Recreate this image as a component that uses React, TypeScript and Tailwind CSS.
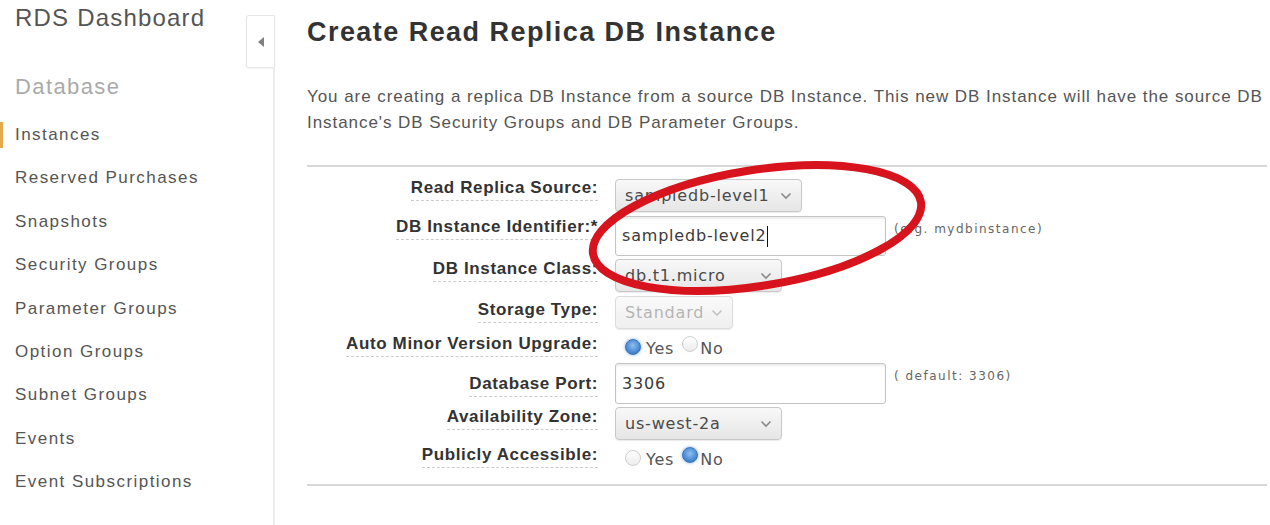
import React from "react";

const sans = { fontFamily: '"Liberation Sans", Arial, sans-serif' };
const ctl = { fontFamily: '"DejaVu Sans", "Liberation Sans", sans-serif' };

const navItems = [
  "Instances",
  "Reserved Purchases",
  "Snapshots",
  "Security Groups",
  "Parameter Groups",
  "Option Groups",
  "Subnet Groups",
  "Events",
  "Event Subscriptions",
];

function Chevron({ light = false }: { light?: boolean }) {
  return (
    <svg width="12" height="8" viewBox="0 0 12 8" className="shrink-0">
      <path
        d="M1.5 1.5 L6 6 L10.5 1.5"
        fill="none"
        stroke={light ? "#c4c4c4" : "#8a8a8a"}
        strokeWidth="1.6"
      />
    </svg>
  );
}

function Select({
  value,
  width,
  height,
  disabled = false,
}: {
  value: string;
  width: number;
  height: number;
  disabled?: boolean;
}) {
  return (
    <div
      style={{ ...ctl, width, height }}
      className={`flex items-center justify-between rounded-[4px] border pl-[9px] pr-[9px] text-[16px] tracking-[0.8px] shadow-[0_1px_1px_rgba(0,0,0,0.08)] ${
        disabled
          ? "border-[#dcdcdc] bg-gradient-to-b from-[#fafafa] to-[#efefef] text-[#b5b5b5]"
          : "border-[#c8c8c8] bg-gradient-to-b from-[#f8f8f8] to-[#e6e6e6] text-[#4a4a4a]"
      }`}
    >
      <span className="truncate">{value}</span>
      <Chevron light={disabled} />
    </div>
  );
}

function TextInput({
  value,
  height,
  caret = false,
}: {
  value: string;
  height: number;
  caret?: boolean;
}) {
  return (
    <div
      style={{ ...ctl, height }}
      className="flex w-[271px] items-center rounded-[3px] border border-[#c4c4c4] bg-white pl-[6px] text-[16px] tracking-[0.8px] text-[#3a3a3a] shadow-[inset_0_2px_2px_rgba(0,0,0,0.08)]"
    >
      <span>{value}</span>
      {caret && <span className="ml-[1px] inline-block h-[21px] w-[1px] bg-[#111]" />}
    </div>
  );
}

function Radio({ checked }: { checked: boolean }) {
  return checked ? (
    <span className="inline-block h-[16px] w-[16px] rounded-full border border-[#3b74b8] bg-[radial-gradient(circle_at_50%_40%,#8fc0f0_0%,#4f8fd6_55%,#2f68b0_100%)] shadow-[0_0_3px_rgba(60,130,220,0.7)]" />
  ) : (
    <span className="inline-block h-[16px] w-[16px] rounded-full border border-[#cfcfcf] bg-gradient-to-b from-[#ffffff] to-[#ececec]" />
  );
}

function RadioPair({ yes }: { yes: boolean }) {
  return (
    <div
      style={ctl}
      className="ml-[10px] flex h-[22px] items-center text-[16px] tracking-[0.8px] text-[#555]"
    >
      <Radio checked={yes} />
      <span className="ml-[5px] mt-[3px]">Yes</span>
      <span className="ml-[8px]">
        <Radio checked={!yes} />
      </span>
      <span className="ml-[2px] mt-[3px]">No</span>
    </div>
  );
}

function Row({
  label,
  rowH,
  labelPt,
  ctlPt = 0,
  hint,
  hintPt = 0,
  children,
}: {
  label: string;
  rowH: number;
  labelPt: number;
  ctlPt?: number;
  hint?: string;
  hintPt?: number;
  children: React.ReactNode;
}) {
  return (
    <div className="flex items-start" style={{ height: rowH }}>
      <div className="flex w-[291px] shrink-0 justify-end" style={{ paddingTop: labelPt }}>
        <span
          style={sans}
          className="border-b border-dashed border-[#cccccc] pb-[2px] text-[17px] font-bold leading-[20px] tracking-[0.62px] text-[#333]"
        >
          {label}
        </span>
      </div>
      <div className="ml-[17px] flex items-start" style={{ paddingTop: ctlPt }}>
        {children}
        {hint && (
          <span
            style={{ ...ctl, paddingTop: hintPt }}
            className="ml-[8px] text-[12px] tracking-[1.5px] text-[#666]"
          >
            {hint}
          </span>
        )}
      </div>
    </div>
  );
}

export default function App() {
  return (
    <div style={sans} className="relative flex h-[525px] w-[1270px] overflow-hidden bg-white">
      {/* navigation */}
      <aside className="flex w-[275px] shrink-0">
        <div className="w-[246px] shrink-0">
          <div className="pl-[15px] pt-[4px] text-[24px] leading-[28px] tracking-[1.2px] text-[#555]">
            RDS Dashboard
          </div>
          <div className="pl-[15px] pt-[41px] text-[22px] leading-[28px] tracking-[1.4px] text-[#aaa]">
            Database
          </div>
          <ul className="mt-[12px]">
            {navItems.map((item, i) => (
              <li key={item} className="relative flex h-[43.4px] items-center pl-[15px]">
                {i === 0 && (
                  <span className="absolute left-0 top-[9px] h-[26px] w-[3px] bg-[#e3a94a]" />
                )}
                <span className="text-[17px] tracking-[1.45px] text-[#555]">{item}</span>
              </li>
            ))}
          </ul>
        </div>
        <div className="flex w-[29px] flex-col pt-[15px]">
          <div className="flex h-[53px] items-center justify-center rounded-l-[3px] border border-[#e6e6e6] bg-white shadow-[0_1px_2px_rgba(0,0,0,0.05)]">
            <svg width="8" height="12" viewBox="0 0 8 12">
              <path d="M7 1 L1 6 L7 11 Z" fill="#808080" />
            </svg>
          </div>
          <div className="flex-1 border-r-2 border-[#ececec]" />
        </div>
      </aside>

      {/* main form */}
      <main className="flex-1 pl-[32px] pr-[3px]">
        <h1 className="pt-[16px] text-[27px] font-bold leading-[32px] tracking-[1.45px] text-[#333]">
          Create Read Replica DB Instance
        </h1>
        <p className="mt-[36px] whitespace-nowrap text-[17px] leading-[26px] tracking-[0.94px] text-[#555]">
          You are creating a replica DB Instance from a source DB Instance. This new DB Instance will have the source DB
          <br />
          Instance's DB Security Groups and DB Parameter Groups.
        </p>

        <div className="mt-[29px] border-y-2 border-[#d8d8d8] pb-[10px] pt-[10px]">
          <Row label="Read Replica Source:" rowH={39} labelPt={1} ctlPt={2}>
            <Select value="sampledb-level1" width={187} height={33} />
          </Row>
          <Row
            label="DB Instance Identifier:*"
            rowH={43}
            labelPt={1}
            hint="(e.g. mydbinstance)"
            hintPt={4}
          >
            <TextInput value="sampledb-level2" height={40} caret />
          </Row>
          <Row label="DB Instance Class:" rowH={37} labelPt={0}>
            <Select value="db.t1.micro" width={167} height={33} />
          </Row>
          <Row label="Storage Type:" rowH={37} labelPt={4}>
            <Select value="Standard" width={118} height={33} disabled />
          </Row>
          <Row label="Auto Minor Version Upgrade:" rowH={28} labelPt={1} ctlPt={3}>
            <RadioPair yes />
          </Row>
          <Row
            label="Database Port:"
            rowH={44}
            labelPt={13}
            ctlPt={2}
            hint="( default: 3306)"
            hintPt={4}
          >
            <TextInput value="3306" height={41} />
          </Row>
          <Row label="Availability Zone:" rowH={39} labelPt={2} ctlPt={2}>
            <Select value="us-west-2a" width={167} height={33} />
          </Row>
          <Row label="Publicly Accessible:" rowH={30} labelPt={1} ctlPt={3}>
            <RadioPair yes={false} />
          </Row>
        </div>
      </main>

      {/* hand-drawn highlight around the replica source fields */}
      <svg
        className="pointer-events-none absolute left-0 top-0"
        width="1270"
        height="525"
        viewBox="0 0 1270 525"
      >
        <ellipse
          cx="757"
          cy="228"
          rx="166"
          ry="58"
          transform="rotate(-9 757 228)"
          fill="none"
          stroke="#d7141d"
          strokeWidth="8"
        />
      </svg>
    </div>
  );
}
